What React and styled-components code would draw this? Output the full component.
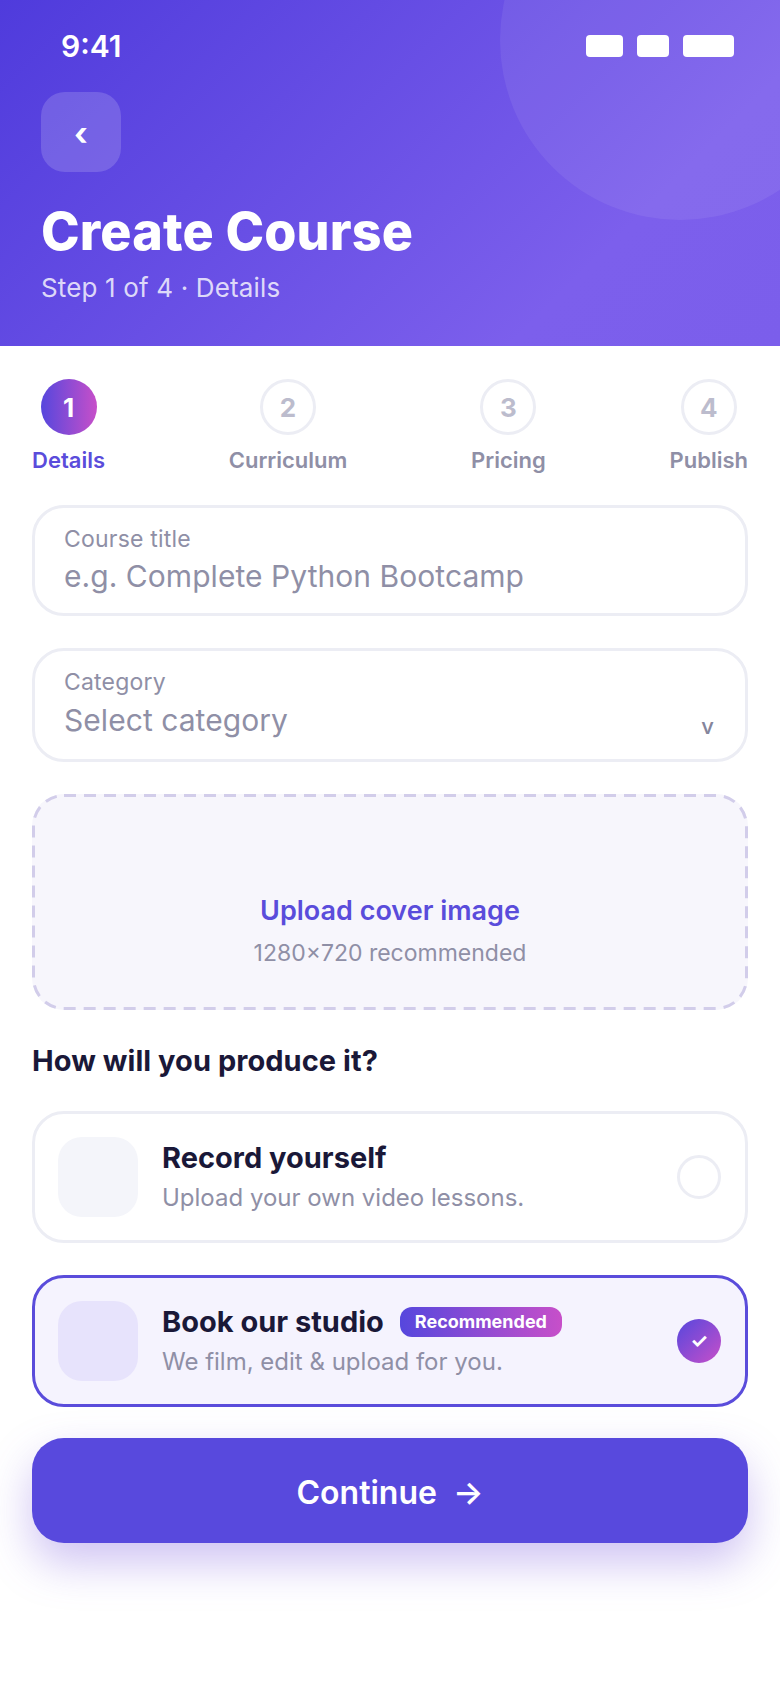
import React from "react";
import styled, { createGlobalStyle } from "styled-components";

const Global = createGlobalStyle`
  * { box-sizing: border-box; }
  html, body { margin: 0; padding: 0; background: #fff; }
  body { font-family: Inter, "Noto Sans", sans-serif; width: 780px; height: 1688px; overflow: hidden; }
`;

const Page = styled.div`
  width: 780px;
  height: 1688px;
  display: flex;
  flex-direction: column;
  background: #fff;
`;

const Header = styled.header`
  position: relative;
  overflow: hidden;
  height: 346px;
  flex: none;
  padding: 0 41px;
  background: linear-gradient(135deg, #4f3bdc 0%, #7c5fec 76%, #7b5eeb 100%);
  color: #fff;
`;

const Blob = styled.div`
  position: absolute;
  left: 500px;
  top: -140px;
  width: 360px;
  height: 360px;
  border-radius: 50%;
  background: rgba(255, 255, 255, 0.07);
`;

const Status = styled.div`
  position: relative;
  height: 92px;
  display: flex;
  justify-content: space-between;
  align-items: flex-start;
  padding: 28px 6px 0 20px;
`;

const Time = styled.span`
  font-size: 30px;
  font-weight: 600;
  line-height: 36px;
`;

const StatusIcons = styled.div`
  display: flex;
  gap: 14px;
  padding-top: 7px;
  margin-right: -1px;
`;

const StatusIcon = styled.i`
  display: block;
  width: ${(p) => p.$w}px;
  height: 22px;
  border-radius: 4px;
  background: #fff;
`;

const Back = styled.div`
  position: relative;
  width: 80px;
  height: 80px;
  padding-top: 4px;
  border-radius: 24px;
  background: rgba(255, 255, 255, 0.16);
  display: flex;
  align-items: center;
  justify-content: center;
  font-size: 32px;
  font-weight: 700;
  line-height: 1;
`;

const Title = styled.h1`
  margin: 28px 0 0;
  font-size: 52px;
  line-height: 64px;
  font-weight: 800;
  letter-spacing: 0.15px;
`;

const Sub = styled.p`
  margin: 8px 0 0;
  font-size: 26px;
  line-height: 32px;
  letter-spacing: 0.15px;
  color: rgba(255, 255, 255, 0.8);
`;

const Content = styled.main`
  padding: 33px 32px 0;
  display: flex;
  flex-direction: column;
`;

const Stepper = styled.div`
  display: flex;
  justify-content: space-between;
  margin-bottom: 29px;
`;

const Step = styled.div`
  display: flex;
  flex-direction: column;
  align-items: center;
  gap: 9px;
`;

const Dot = styled.div`
  width: 56px;
  height: 56px;
  border-radius: 50%;
  display: flex;
  align-items: center;
  justify-content: center;
  font-size: 26px;
  font-weight: 700;
  color: ${(p) => (p.$active ? "#fff" : "#bcbccd")};
  background: ${(p) => (p.$active ? "linear-gradient(90deg, #5647dd, #c74fc9)" : "#fff")};
  border: ${(p) => (p.$active ? "none" : "3px solid #ecedf4")};
`;

const StepLabel = styled.span`
  font-size: 22px;
  line-height: 32px;
  font-weight: 600;
  color: ${(p) => (p.$active ? "#5a4cdb" : "#8f8fa6")};
`;

const Field = styled.div`
  position: relative;
  height: ${(p) => p.$h}px;
  margin-bottom: 32px;
  padding: 17px 29px 0;
  border: 3px solid #ecedf4;
  border-radius: 32px;
  background: #fff;
`;

const FieldLabel = styled.div`
  font-size: 23px;
  line-height: 28px;
  font-weight: 400;
  letter-spacing: 0.2px;
  color: #8f8fa6;
`;

const FieldValue = styled.div`
  margin-top: ${(p) => p.$gap}px;
  font-size: 30px;
  line-height: 36px;
  letter-spacing: 0.05px;
  color: #8f8fa6;
`;

const Caret = styled.span`
  position: absolute;
  right: 31px;
  bottom: 19px;
  font-size: 22px;
  line-height: 28px;
  font-weight: 500;
  color: #85859c;
`;

const Upload = styled.div`
  position: relative;
  height: 216px;
  margin-bottom: 33px;
  padding-top: 99px;
  border-radius: 32px;
  background: #f7f6fc;
  text-align: center;
`;

const DashedEdge = styled.svg`
  position: absolute;
  inset: 0;
  width: 100%;
  height: 100%;
  overflow: visible;
`;

const UploadTitle = styled.div`
  font-size: 27px;
  line-height: 36px;
  font-weight: 600;
  color: #5a4cdb;
`;

const UploadHint = styled.div`
  margin-top: 10px;
  font-size: 23px;
  line-height: 28px;
  color: #8f8fa6;
`;

const Heading = styled.h2`
  margin: 0 0 32px;
  font-size: 29px;
  line-height: 36px;
  font-weight: 700;
  letter-spacing: 0.05px;
  color: #1a1838;
`;

const Option = styled.div`
  height: 132px;
  margin-bottom: ${(p) => (p.$on ? 31 : 32)}px;
  padding: 0 24px 0 23px;
  display: flex;
  align-items: center;
  gap: 24px;
  border: 3px solid ${(p) => (p.$on ? "#5a4cdb" : "#ecedf4")};
  border-radius: 32px;
  background: ${(p) => (p.$on ? "#f5f3fe" : "#fff")};
`;

const Thumb = styled.div`
  width: 80px;
  height: 80px;
  flex: none;
  border-radius: 24px;
  background: ${(p) => (p.$on ? "#e7e3fc" : "#f4f5fa")};
`;

const OptionText = styled.div`
  flex: 1;
  margin-top: -2px;
`;

const OptionTitle = styled.div`
  display: flex;
  align-items: center;
  gap: 16px;
  font-size: 29px;
  line-height: 38px;
  font-weight: 700;
  color: #1a1838;
`;

const Badge = styled.span`
  height: 30px;
  padding: 0 15px;
  display: inline-flex;
  align-items: center;
  border-radius: 12px;
  font-size: 18px;
  font-weight: 700;
  color: #fff;
  background: linear-gradient(90deg, #5647dd, #c74fc9);
`;

const OptionDesc = styled.div`
  margin-top: 5px;
  font-size: 24px;
  line-height: 32px;
  color: #8f8fa6;
`;

const Radio = styled.div`
  width: 44px;
  height: 44px;
  flex: none;
  border-radius: 50%;
  display: flex;
  align-items: center;
  justify-content: center;
  font-size: 20px;
  font-weight: 700;
  color: #fff;
  border: ${(p) => (p.$on ? "none" : "3px solid #ecedf4")};
  background: ${(p) => (p.$on ? "linear-gradient(135deg, #5647dd, #c74fc9)" : "#fff")};
`;

const Cta = styled.div`
  height: 105px;
  padding-top: 3px;
  display: flex;
  align-items: center;
  justify-content: center;
  gap: 16px;
  border-radius: 32px;
  background: #5849dd;
  color: #fff;
  font-size: 32px;
  font-weight: 600;
  box-shadow: 0 20px 44px rgba(122, 88, 222, 0.36);
`;

const steps = ["Details", "Curriculum", "Pricing", "Publish"];

export default function App() {
  return (
    <Page>
      <Global />
      <Header>
        <Blob />
        <Status>
          <Time>9:41</Time>
          <StatusIcons>
            <StatusIcon $w={37} />
            <StatusIcon $w={32} />
            <StatusIcon $w={51} />
          </StatusIcons>
        </Status>
        <Back>‹</Back>
        <Title>Create Course</Title>
        <Sub>Step 1 of 4 · Details</Sub>
      </Header>
      <Content>
        <Stepper>
          {steps.map((s, i) => (
            <Step key={s}>
              <Dot $active={i === 0}>{i + 1}</Dot>
              <StepLabel $active={i === 0}>{s}</StepLabel>
            </Step>
          ))}
        </Stepper>
        <Field $h={111}>
          <FieldLabel>Course title</FieldLabel>
          <FieldValue $gap={5}>e.g. Complete Python Bootcamp</FieldValue>
        </Field>
        <Field $h={114}>
          <FieldLabel>Category</FieldLabel>
          <FieldValue $gap={6}>Select category</FieldValue>
          <Caret>v</Caret>
        </Field>
        <Upload>
          <DashedEdge viewBox="0 0 716 216" aria-hidden="true">
            <rect
              x="1.5"
              y="1.5"
              width="713"
              height="213"
              rx="30.5"
              fill="none"
              stroke="#d2cdea"
              strokeWidth="3"
              strokeDasharray="12 8"
            />
          </DashedEdge>
          <UploadTitle>Upload cover image</UploadTitle>
          <UploadHint>1280×720 recommended</UploadHint>
        </Upload>
        <Heading>How will you produce it?</Heading>
        <Option>
          <Thumb />
          <OptionText>
            <OptionTitle>Record yourself</OptionTitle>
            <OptionDesc>Upload your own video lessons.</OptionDesc>
          </OptionText>
          <Radio />
        </Option>
        <Option $on>
          <Thumb $on />
          <OptionText>
            <OptionTitle>
              Book our studio <Badge>Recommended</Badge>
            </OptionTitle>
            <OptionDesc>We film, edit &amp; upload for you.</OptionDesc>
          </OptionText>
          <Radio $on>✓</Radio>
        </Option>
        <Cta>
          Continue <span>→</span>
        </Cta>
      </Content>
    </Page>
  );
}
